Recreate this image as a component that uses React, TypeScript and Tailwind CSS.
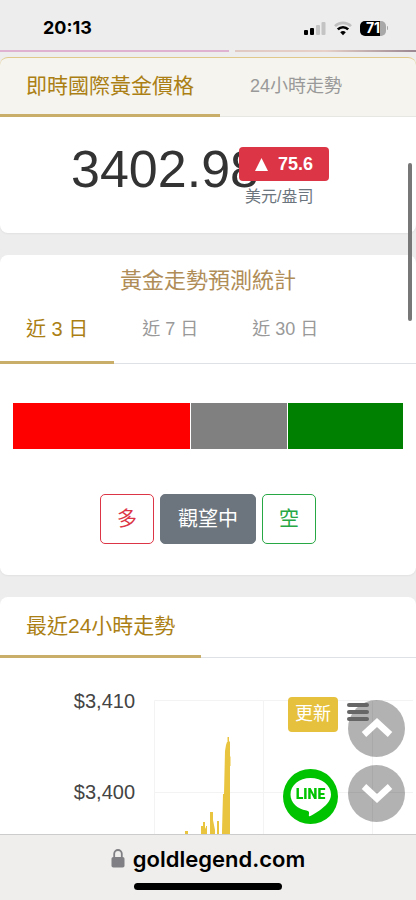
import clsx from "clsx";
import type { ReactNode } from "react";

const forecast = [
  { key: "long", share: 177, color: "bg-[#ff0000]" },
  { key: "wait", share: 97, color: "bg-[#808080]" },
  { key: "short", share: 115, color: "bg-[#008000]" }
];

function StatusBar() {
  return (
    <header className="flex h-[50px] shrink-0 items-center justify-between pt-1.5 pr-7 pl-[43px]">
      <span className="font-['Inter',sans-serif] text-lg font-bold text-black">20:13</span>
      <div className="flex items-center gap-2">
        <svg width="22" height="15" viewBox="0 0 22 15" aria-hidden="true">
          <rect x="0" y="9" width="4" height="5" rx="1" />
          <rect x="6" y="7" width="4" height="7" rx="1" />
          <rect x="12" y="4" width="4" height="10" rx="1" fill="#c4c4c4" />
          <rect x="17.5" y="1" width="4" height="13" rx="1" fill="#c4c4c4" />
        </svg>
        <svg width="18" height="15" viewBox="0 0 18 15" fill="none" aria-hidden="true">
          <path d="M1 5.2C5.4 0.7 12.6 0.7 17 5.2" stroke="#c0c0c0" strokeWidth="2.6" />
          <path d="M3.8 8.4c2.9-2.9 7.5-2.9 10.4 0" stroke="#000" strokeWidth="2.6" />
          <path d="M9 14.2 6.2 11.3a4 4 0 0 1 5.6 0z" fill="#000" />
        </svg>
        <div className="flex items-center gap-px">
          <span className="flex h-[15px] w-[26px] items-center justify-center rounded-[5px] bg-linear-to-r from-black from-75% to-[#a8a8a8] to-75% font-['Inter',sans-serif] text-sm leading-4 font-bold text-white">
            71
          </span>
          <span className="h-1 w-px rounded-r bg-[#a8a8a8]" />
        </div>
      </div>
    </header>
  );
}

function Tab({ active, wide, children }: { active?: boolean; wide?: boolean; children: ReactNode }) {
  return (
    <button
      type="button"
      role="tab"
      aria-selected={!!active}
      className={clsx(
        "-mb-px border-b-[3px]",
        active ? "border-[#c8ae68] px-[26px] text-[#ab7f14]" : "border-transparent text-lg text-[#999]",
        !active && (wide ? "px-[30px]" : "px-[26px]")
      )}
    >
      {children}
    </button>
  );
}

function PriceCard() {
  return (
    <section className="rounded-lg bg-white shadow-xs">
      <div role="tablist" className="flex h-[60px] rounded-t-lg border-t border-b border-t-[#dfc88a] border-b-[#e6e6e2] bg-[#f5f4ee] text-[21px]">
        <Tab active>即時國際黃金價格</Tab>
        <Tab wide>24小時走勢</Tab>
      </div>
      <div className="flex h-[116px] items-start pt-[30px] pl-[71px]">
        <p className="-mt-2 text-[52px] leading-[60px] text-[#333]">3402.98</p>
        <div className="relative -ml-5 flex flex-col items-start gap-1">
          <span className="flex h-[34px] items-center gap-2.5 rounded-[4px] bg-[#dc3545] px-4 text-lg font-bold text-white">
            <svg width="13" height="13" viewBox="0 0 13 13" fill="currentColor" aria-hidden="true">
              <path d="M6.5 0 13 13H0z" />
            </svg>
            75.6
          </span>
          <span className="px-1.5 text-base leading-6 text-[#6c757d]">美元/盎司</span>
        </div>
      </div>
    </section>
  );
}

function ForecastCard() {
  const total = forecast.reduce((sum, part) => sum + part.share, 0);

  return (
    <section className="rounded-lg bg-white pb-[31px] shadow-xs">
      <h2 className="pt-2.5 text-center text-[22px] leading-8 text-[#b08d57]">黃金走勢預測統計</h2>
      <div role="tablist" className="flex h-[67px] gap-0.5 border-b border-[#dee2e6] text-xl">
        <Tab active>近 3 日</Tab>
        <Tab>近 7 日</Tab>
        <Tab>近 30 日</Tab>
      </div>
      <div className="mx-[13px] mt-[39px] flex h-[46px] gap-px">
        {forecast.map((part) => (
          <div key={part.key} className={part.color} style={{ width: `${(part.share / total) * 100}%` }} />
        ))}
      </div>
      <div className="mt-[45px] flex justify-center gap-1.5 text-xl">
        <button type="button" className="h-[50px] rounded-[5px] border border-[#dc3545] px-4 text-[#dc3545]">
          多
        </button>
        <button type="button" className="h-[50px] rounded-[5px] border border-[#6c757d] bg-[#6c757d] px-[17px] text-white">
          觀望中
        </button>
        <button type="button" className="h-[50px] rounded-[5px] border border-[#28a745] px-4 text-[#28a745]">
          空
        </button>
      </div>
    </section>
  );
}

function TrendCard() {
  return (
    <section className="relative rounded-t-lg bg-white">
      <div role="tablist" className="flex h-[61px] border-b border-[#dee2e6] text-[21px]">
        <Tab active>最近24小時走勢</Tab>
      </div>
      <div className="flex pt-[33px]">
        <div className="flex w-[135px] shrink-0 flex-col gap-[71px] text-right text-xl leading-5 text-[#444]">
          <span>$3,410</span>
          <span>$3,400</span>
        </div>
        <svg className="ml-[18px] h-[200px] min-w-0 flex-1" aria-hidden="true">
          <path d="M1.5 9.5H260M1.5 101.500H260M1.5 9.5V200M110.500 9.5V200M219.500 9.5V200" fill="none" stroke="#f3f3f3" />
          <path
            fill="#e9c53f"
            d="M32 200v-60h3v60zM48 200v-65h2v-4h2v5l1 2v-3h1v65zM57 200v-79h3v8l2 10v61zM64 200v-70h2v70zM69 200v-60l1-37h1l1-43 1-6 1-3h.5v-5h1.500v4l1 1v14l.5 1v9h-.5v125z"
          />
        </svg>
      </div>
      <button type="button" className="absolute top-[100px] right-[78px] h-[35px] rounded-[4px] bg-[#e6c13d] px-[7px] pb-0.5 text-lg text-white">
        更新
      </button>
      <button type="button" aria-label="選單" className="absolute top-[106px] right-[47px] z-20 flex flex-col gap-[3px]">
        <span className="h-1 w-[22px] rounded-full bg-[#666]" />
        <span className="h-1 w-[22px] rounded-full bg-[#666]" />
        <span className="h-1 w-[22px] rounded-full bg-[#666]" />
      </button>
    </section>
  );
}

function FloatingButtons() {
  return (
    <div className="fixed right-[11px] bottom-[78px] z-10 flex items-end gap-2.5">
      <a href="#line" aria-label="LINE" className="-mb-0.5">
        <svg width="55" height="55" viewBox="0 0 55 55">
          <circle cx="27.5" cy="27.5" r="27.5" fill="#00c300" />
          <path
            fill="#fff"
            d="M27.5 9C16.200 9 7.500 16.300 7.500 25.400c0 8 6.800 14.700 16 16 2.100.4 2.800 1.200 2.500 3.200l-.2 2c0 .8.6 1 1.500.5 6.500-3.300 13.300-8.300 17-12.600 2.200-2.600 3.700-5.800 3.700-9.100C48 16.300 38.800 9 27.500 9z"
          />
          <text x="27.5" y="30" textAnchor="middle" fill="#00c300" className="font-['Roboto',sans-serif] text-[14px] font-black">
            LINE
          </text>
        </svg>
      </a>
      <div className="flex flex-col gap-2">
        <button type="button" aria-label="上" className="flex size-[57px] items-center justify-center rounded-full bg-black/30">
          <svg width="32" height="24" viewBox="0 0 32 24" fill="none" stroke="#fff" strokeWidth="6.500" aria-hidden="true">
            <path d="M3 17.500 16 5.500 29 17.500" />
          </svg>
        </button>
        <button type="button" aria-label="下" className="flex size-[57px] items-center justify-center rounded-full bg-black/30">
          <svg width="32" height="24" viewBox="0 0 32 24" fill="none" stroke="#fff" strokeWidth="6.500" aria-hidden="true">
            <path d="M3 4.500 16 16.500 29 4.500" />
          </svg>
        </button>
      </div>
    </div>
  );
}

function AddressBar() {
  return (
    <footer className="flex h-[66px] shrink-0 flex-col items-center border-t border-[#ccc] bg-[#efeeed] pt-2">
      <div className="flex items-center gap-2">
        <svg width="14" height="20" viewBox="0 0 14 20" aria-hidden="true">
          <path d="M3.200 9V4.800a3.800 3.800 0 0 1 7.600 0V9" fill="none" stroke="#808084" strokeWidth="1.800" />
          <rect x="0.500" y="8" width="13" height="10.500" rx="1.800" fill="#808084" />
        </svg>
        <span className="font-['Inter',sans-serif] text-[22px] leading-8 font-semibold text-black">goldlegend.com</span>
      </div>
      <span className="mt-2 h-[7px] w-[148px] rounded-full bg-black" />
    </footer>
  );
}

export default function App() {
  return (
    <div className="flex h-screen flex-col overflow-hidden bg-[#ededed] font-['Liberation_Sans','Noto_Sans_CJK_TC',sans-serif]">
      <StatusBar />
      <div className="mb-[5px] flex h-0.5 shrink-0 gap-1.5">
        <div className="w-[55%] bg-[#deb2d0]" />
        <div className="flex-1 bg-linear-to-r from-[#dfc9c2] via-[#e6d0c8] to-[#9b8791]" />
      </div>
      <main className="flex min-h-0 flex-1 flex-col gap-[22px] overflow-hidden">
        <PriceCard />
        <ForecastCard />
        <TrendCard />
      </main>
      <AddressBar />
      <FloatingButtons />
      <div className="fixed top-[163px] right-1 z-30 h-[158px] w-1 rounded-full bg-[#777]" />
    </div>
  );
}
